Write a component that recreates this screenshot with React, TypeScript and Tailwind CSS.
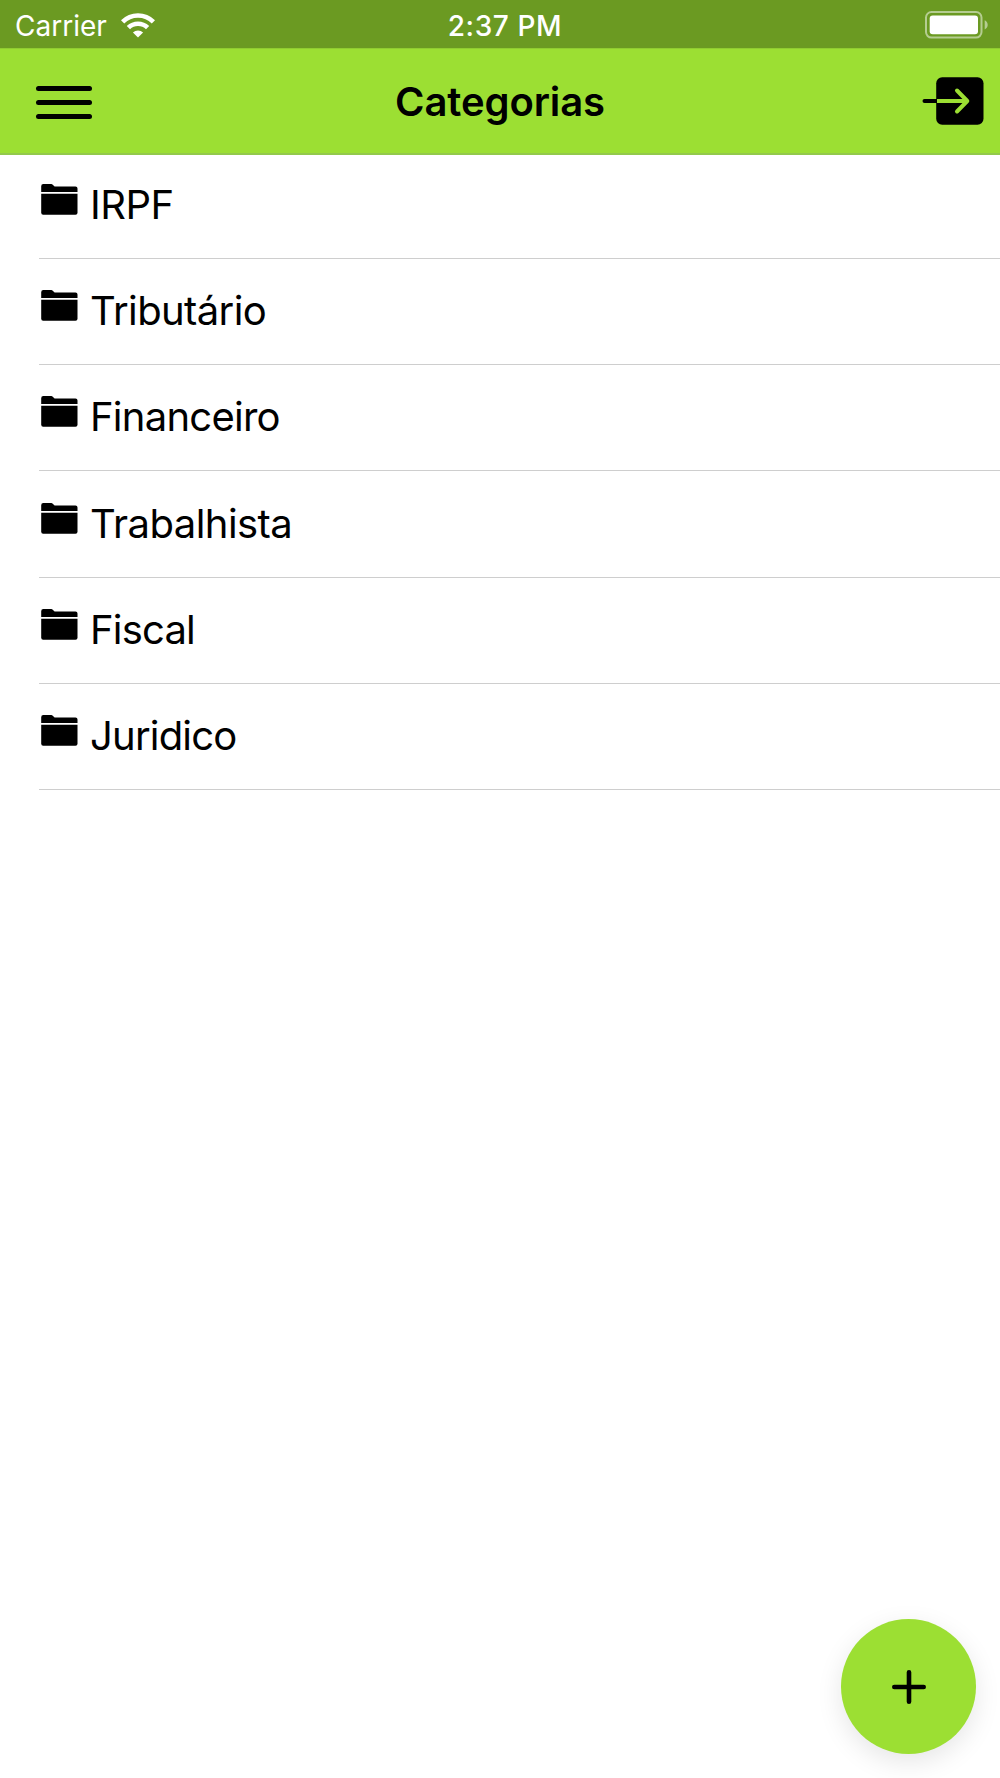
const categories = [
  { name: 'IRPF', row: 'h-[104px]', tracking: 'tracking-[-0.5px]' },
  { name: 'Tributário', row: 'h-[106px]', tracking: 'tracking-[-0.6px]' },
  { name: 'Financeiro', row: 'h-[106px]', tracking: 'tracking-[-0.75px]' },
  { name: 'Trabalhista', row: 'h-[107px]', tracking: 'tracking-[-0.55px]' },
  { name: 'Fiscal', row: 'h-[106px]', tracking: 'tracking-[-0.8px]' },
  { name: 'Juridico', row: 'h-[106px]', tracking: 'tracking-[-0.8px]' },
]

function WifiIcon() {
  return (
    <svg width="34" height="25" viewBox="0 0 34 25" fill="none" stroke="white" strokeWidth="4.6">
      <path d="M1.6 8.9a21.8 21.8 0 0 1 30.8 0" />
      <path d="M7.4 14.7a13.6 13.6 0 0 1 19.2 0" />
      <path d="M17 24.6l-5.1-5.1a7.2 7.2 0 0 1 10.2 0z" fill="white" stroke="none" />
    </svg>
  )
}

function BatteryIcon() {
  return (
    <svg width="64" height="28" viewBox="0 0 64 28">
      <rect x="1" y="1" width="55.5" height="25.6" rx="5.5" fill="none" stroke="white" strokeOpacity="0.5" strokeWidth="2" />
      <rect x="4.7" y="4.5" width="48.3" height="18.8" rx="3" fill="white" />
      <path d="M59.7 9.3c4 1.8 4 7.4 0 9.2z" fill="white" fillOpacity="0.5" />
    </svg>
  )
}

function ExitIcon() {
  return (
    <svg width="64" height="50" viewBox="0 0 64 50" fill="none" strokeWidth="4" strokeLinecap="round" strokeLinejoin="round">
      <path d="M4.5 25h14" stroke="black" />
      <rect x="16.2" y="1.2" width="47.3" height="47.6" rx="6" fill="black" />
      <path d="M17 25h30" stroke="#9cdf33" strokeLinecap="butt" />
      <path d="M37 14.5L47.3 25L37 35.5" stroke="#9cdf33" />
    </svg>
  )
}

function FolderIcon() {
  return (
    <svg width="37" height="31" viewBox="0 0 37 31" fill="black">
      <path d="M0.2 8V2.2Q0.2 0.1 2.3 0.1H10.2Q11.2 0.1 12 0.9L13.6 2.4H34.5Q36.5 2.4 36.5 4.4V8z" />
      <path d="M0.2 9.7H36.5V28.7Q36.5 30.8 34.5 30.8H2.2Q0.2 30.8 0.2 28.7z" />
    </svg>
  )
}

export default function App() {
  return (
    <div className="relative flex h-[1778px] w-[1000px] flex-col overflow-hidden bg-white font-['Inter',sans-serif] text-black">
      <div className="grid h-12 grid-cols-3 items-center bg-[#6b9a22] text-white">
        <div className="flex items-center gap-3 pl-[15px]">
          <span className="w-[94px] pt-[2px] text-[28px] leading-[48px] whitespace-nowrap">Carrier</span>
          <WifiIcon />
        </div>
        <span className="pt-[2px] pl-[10px] text-center text-[28px] leading-[48px] font-medium tracking-[0.6px]">2:37 PM</span>
        <div className="flex justify-end pr-[11px]">
          <BatteryIcon />
        </div>
      </div>

      <header className="grid h-[107px] grid-cols-3 items-center border-t border-b-2 border-t-[#90cc31] border-b-[#93c94c] bg-[#9cdf33]">
        <button className="ml-9 flex w-14 flex-col gap-[9px] pt-[2px]" aria-label="Menu">
          <span className="h-[5px] rounded-full bg-black" />
          <span className="h-[5px] rounded-full bg-black" />
          <span className="h-[5px] rounded-full bg-black" />
        </button>
        <h1 className="pt-[2px] text-center text-[40px] leading-[48px] font-semibold tracking-[-0.1px]">Categorias</h1>
        <button className="flex justify-end pr-4" aria-label="Sair">
          <ExitIcon />
        </button>
      </header>

      <ul className="pl-[39px]">
        {categories.map(({ name, row, tracking }) => (
          <li key={name} className={`${row} flex items-end gap-3 border-b border-[#cecece] pl-[2px]`}>
            <span className="mb-[43px]">
              <FolderIcon />
            </span>
            <span className={`${tracking} mb-[23px] text-[40px] leading-[60px] whitespace-nowrap`}>{name}</span>
          </li>
        ))}
      </ul>

      <button
        className="absolute right-[24px] bottom-[24px] flex size-[135px] items-center justify-center rounded-full bg-[#9cdf33] shadow-[0_8px_26px_rgba(0,0,0,0.1)]"
        aria-label="Adicionar"
      >
        <svg width="36" height="36" viewBox="0 0 36 36" stroke="black" strokeWidth="4.6" strokeLinecap="round">
          <path d="M3.3 18h29.4M18 3.3v29.4" />
        </svg>
      </button>
    </div>
  )
}
